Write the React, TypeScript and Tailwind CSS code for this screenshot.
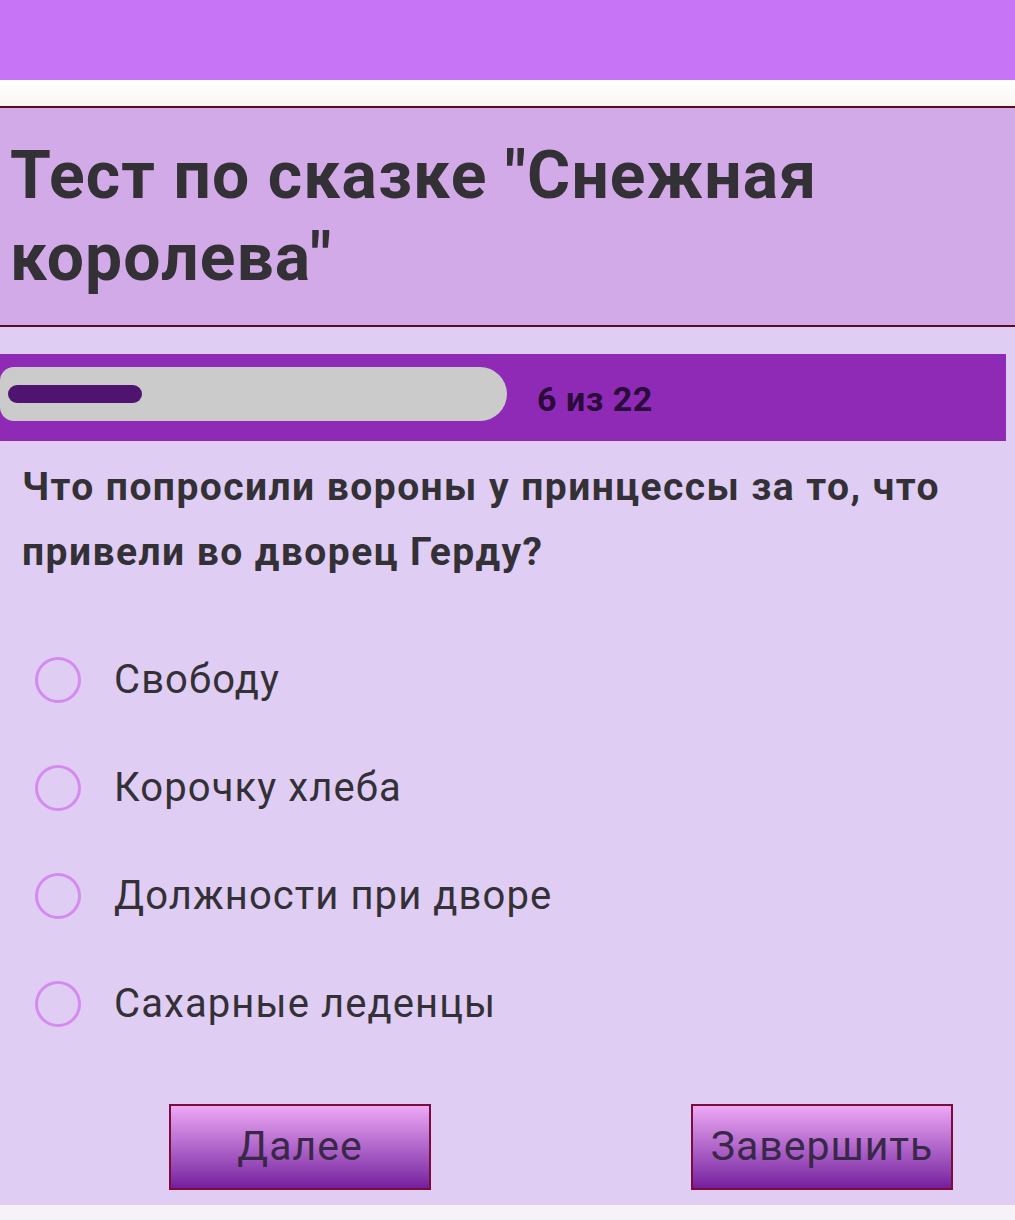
import React from "react";

const options = ["Свободу", "Корочку хлеба", "Должности при дворе", "Сахарные леденцы"];

export default function App() {
  return (
    <div className="w-[1015px] min-h-[1220px] bg-[#f5f3f8]" style={{ fontFamily: "Roboto, 'Noto Sans', sans-serif" }}>
      <div className="h-[80px] bg-[#c774f7]" />
      <div className="h-[26px] bg-gradient-to-b from-white to-[#f9f7f2]" />
      <div className="h-[221px] bg-[#d3aae8] border-y-2 border-[#5c0c22] px-[10px] pt-[27px]">
        <h1 className="text-[66px] leading-[82px] font-bold text-[#333036] tracking-[1.1px]">Тест по сказке "Снежная королева"</h1>
      </div>
      <div className="bg-[#dfcdf4] pt-[27px] pb-[15px]">
        <div className="w-[1006px] h-[87px] bg-[#8e2ab5] flex items-start pt-[13px]">
          <div className="w-[507px] h-[54px] bg-[#cbcbcb] rounded-r-[27px] rounded-l-[14px] flex items-center pl-[8px]">
            <div className="w-[134px] h-[18px] rounded-full bg-[#4f1470]" />
          </div>
          <div className="ml-[30px] h-[54px] flex items-center mt-[5px] text-[34px] font-bold text-[#2a0b3a] tracking-[0.5px]">6 из 22</div>
        </div>
        <p className="mt-[14px] px-[22px] text-[39px] leading-[65px] font-bold text-[#333036] tracking-[1.45px]">
          Что попросили вороны у принцессы за то, что привели во дворец Герду?
        </p>
        <div className="mt-[72px] flex flex-col gap-[62px]">
          {options.map((o) => (
            <div key={o} className="flex items-center h-[46px]">
              <div className="ml-[35px] w-[46px] h-[46px] rounded-full border-[3px] border-[#d58af0]" />
              <span className="ml-[33px] text-[40px] text-[#333036] tracking-[1.1px]">{o}</span>
            </div>
          ))}
        </div>
        <div className="mt-[77px] flex">
          <button className="ml-[169px] w-[262px] h-[86px] border-2 border-[#7c0c3c] bg-gradient-to-b from-[#eea8f5] to-[#761c9e] text-[41px] text-[#3a2848] tracking-[1px] flex items-center justify-center">
            Далее
          </button>
          <button className="ml-[260px] w-[262px] h-[86px] border-2 border-[#7c0c3c] bg-gradient-to-b from-[#eea8f5] to-[#761c9e] text-[41px] text-[#3a2848] tracking-[1px] flex items-center justify-center">
            Завершить
          </button>
        </div>
      </div>
    </div>
  );
}
